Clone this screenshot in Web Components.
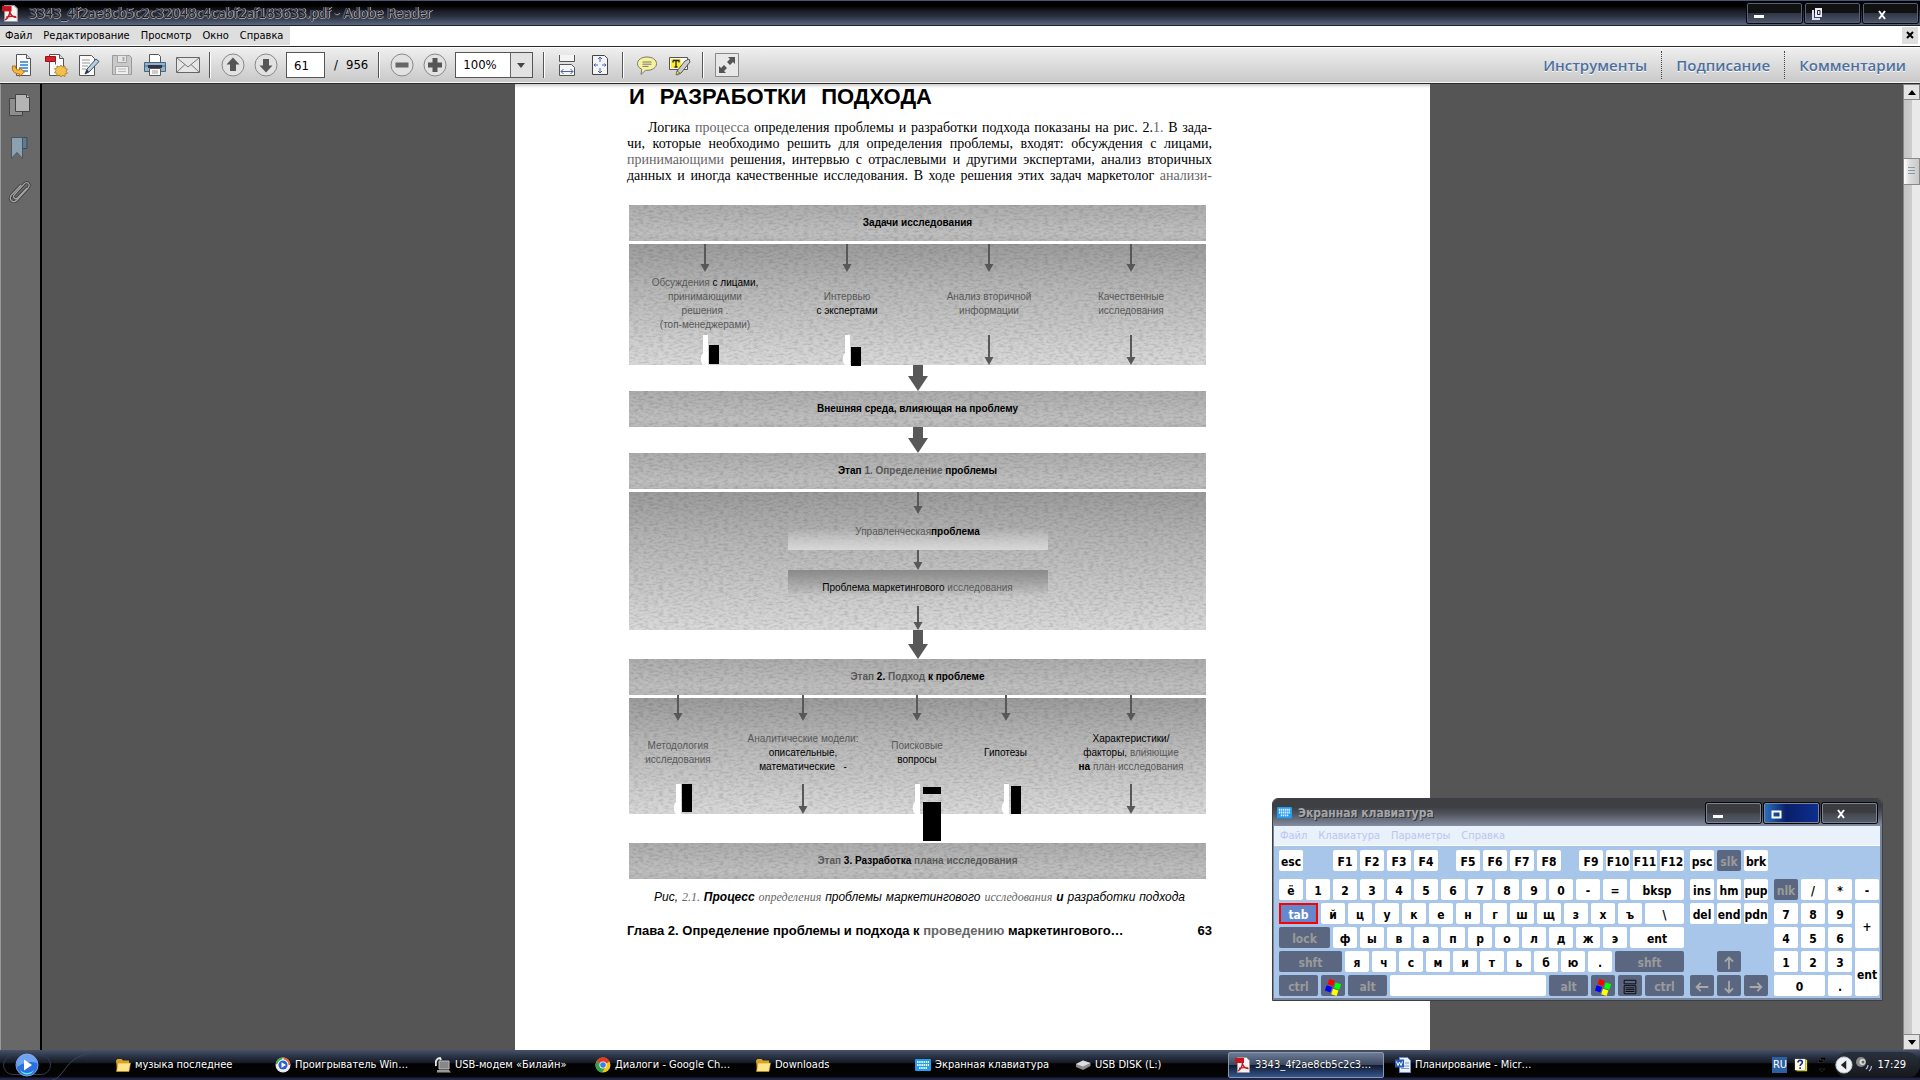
<!DOCTYPE html>
<html lang="ru">
<head>
<meta charset="utf-8">
<title>Adobe Reader</title>
<style>
html,body{margin:0;height:100%}
body{--ui:"DejaVu Sans Condensed","Noto Sans",sans-serif;font:11px/14px var(--ui);color:#000;overflow:hidden}
</style>
</head>
<body>
<app-desktop></app-desktop>
<script>
const define=(name,html)=>customElements.define(name,class extends HTMLElement{
  connectedCallback(){
    if(this.shadowRoot)return;
    const root=this.attachShadow({mode:'open'});
    const t=document.createElement('template');
    t.innerHTML='<style>:host,*{box-sizing:border-box}button{font:inherit;color:inherit;border:0;padding:0;margin:0;background:none}:host{display:block}:host([hidden]){display:none}</style>'+(typeof html==='function'?html(this):html);
    root.append(t.content.cloneNode(true));
  }
});

/* ---------- icons ---------- */
const sheet='<path d="M5.5 1.5h10l4 4v17h-14z" fill="#fafafa" stroke="#555"/><path d="M15.5 1.5v4h4" fill="#ddd" stroke="#555"/>';
const ICONS={
 open:[24,sheet+'<path d="M9 9h8M9 12h8M9 15h8M12 18h5" stroke="#2a7fd4" stroke-width="1.6"/><path d="M1.500 13c-1 6 3 8 7 8v2.500l5-4.500-5-4.500V17c-3 0-4-1-4-4z" fill="#f6b93b" stroke="#a9701a"/>'],
 create:[24,sheet+'<path d="M1.500 3.500h10v5h-10z" fill="#d9202c" stroke="#a01018"/><path d="M11.500 8.500v3" stroke="#555"/><path d="M17 12l1.500 2 2.500-1 0 2.500 2.500.7-1.500 2 1.500 2-2.500.8v2.500l-2.500-1L17 24l-1.500-2-2.500 1v-2.500l-2.500-.8 1.500-2-1.500-2 2.500-.7V13l2.500 1z" fill="#f3c04b" stroke="#a9772a" stroke-width=".8"/>'],
 sign:[24,'<path d="M2.500 2.500h12l3 3v17h-15z" fill="#fafafa" stroke="#555"/><path d="M5 7h8M5 10h8M5 13h6M5 16h4" stroke="#999"/><path d="M8 21l2-5L19 6l3 2.500L12 19z" fill="#b8cfe6" stroke="#3c4f63"/><path d="M8 21l2-5 2 3z" fill="#333"/>'],
 save:[24,'<path d="M2.500 2.500h17l2 2v17h-19z" fill="#c9c9c9" stroke="#9a9a9a"/><path d="M7.500 2.500h9v7h-9z" fill="#e6e6e6" stroke="#a5a5a5"/><path d="M12.500 4h2v4h-2z" fill="#aaa"/><path d="M5.500 13.500h13v8h-13z" fill="#eee" stroke="#a5a5a5"/><path d="M8 16h8M8 18.500h8" stroke="#bbb"/>'],
 print:[24,'<path d="M6.500 9v-7.500h9l2 2V9" fill="#fff" stroke="#555"/><path d="M1.500 9.500h21v9h-21z" fill="#8fb4d0" stroke="#476580"/><path d="M2 13h20" stroke="#476580"/><path d="M5 12h14v3H5z" fill="#334"/><path d="M6.500 15.500h11v7h-11z" fill="#fff" stroke="#555"/><path d="M9 18h6M9 20h6" stroke="#999"/>'],
 mail:[24,'<path d="M.5 4.500h23v15H.5z" fill="#e6e6e6" stroke="#666"/><path d="M1 5l11 9L23 5M1 19l8-7.500M23 19l-8-7.500" fill="none" stroke="#777"/>'],
 up:[24,'<circle cx="12" cy="12" r="11" fill="#e2e2e2" stroke="#888"/><path d="M12 4.500l6.500 7H15v6.500H9v-6.500H5.500z" fill="#555"/>'],
 down:[24,'<circle cx="12" cy="12" r="11" fill="#e2e2e2" stroke="#888"/><path d="M12 19.500l6.500-7H15V6H9v6.500H5.500z" fill="#555"/>'],
 minus:[24,'<circle cx="12" cy="12" r="11" fill="#e2e2e2" stroke="#888"/><path d="M5.500 9.500h13v5h-13z" fill="#666"/>'],
 plus:[24,'<circle cx="12" cy="12" r="11" fill="#e2e2e2" stroke="#888"/><path d="M9.500 5h5v4.500H19v5h-4.500V19h-5v-4.500H5v-5h4.500z" fill="#555"/>'],
 fitw:[24,'<path d="M4.500 2v6.500h15V2" fill="#f4f4f4" stroke="#555"/><path d="M4.500 22.500v-11h12l3 3v8z" fill="#f4f4f4" stroke="#555"/><path d="M6 18.500h12M8.500 16L6 18.500 8.500 21M15.500 16l2.500 2.500-2.500 2.500" fill="none" stroke="#4a62a8"/>'],
 fitp:[24,'<path d="M4.500 2.500h12l3 3v16h-15z" fill="#f4f4f4" stroke="#444"/><path d="M12 4v5M10 6l2-2 2 2M12 20v-5M10 18l2 2 2-2M6 12h4M7.500 10.500L6 12l1.500 1.500M18 12h-4M16.500 10.500L18 12l-1.500 1.500" fill="none" stroke="#4a62a8"/>'],
 note:[24,'<path d="M12 4c5.500 0 9.500 2.800 9.500 6.700S17.500 17.300 12 17.300h-1.500L6 21.500l.8-5.300C4 15 2.500 13 2.500 10.700 2.500 6.800 6.500 4 12 4z" fill="#f8f39a" stroke="#777"/><path d="M7.500 9h9M7.500 11.200h9M7.500 13.400h6" stroke="#777"/>'],
 hilite:[24,'<path d="M1.500 4.500h18v12h-18z" fill="#fafafa" stroke="#555"/><path d="M3 6h10v9H3z" fill="#ffee2e"/><path d="M5 7.500h6v2M5 7.500v2M8 8v6M6.500 14h3" stroke="#222" fill="none" stroke-width="1.300"/><path d="M9 18l8-10 4-2 1 3-9 11-4 2z" fill="#ccc" stroke="#555"/><path d="M8 22l1-4 3 2z" fill="#ffee2e" stroke="#775"/>'],
 full:[24,'<path d="M.5.500h23v23H.5z" fill="#e8e8e8" stroke="#888"/><path d="M13 4h7v7l-2-2-3 3-3-3 3-3zM11 20H4v-7l2 2 3-3 3 3-3 3z" fill="#555"/>'],
 pages:[24,'<path d="M1.500 5.500h13v17h-13z" fill="#8e8e8e" stroke="#444"/><path d="M7.500 1.500h11l3 3v14h-14z" fill="#b4b4b4" stroke="#444"/><path d="M18.500 1.500v3h3" fill="#ddd" stroke="#444"/>'],
 mark:[24,'<path d="M13 1.500h6v11h-6z" fill="#5b7b93" stroke="#3c4a55"/><path d="M3.500 1.500h11v21l-5.500-6-5.500 6z" fill="#8ba0b0" stroke="#4a545c"/>'],
 clip:[24,'<path d="M19 9l-9 9.500c-3 3-6-.5-3.500-3L16 5c3.500-3.500 7 .5 4 4l-11 12c-4 4-9-.5-5.500-5L13 6" fill="none" stroke="#333" stroke-width="2.800"/><path d="M19 9l-9 9.500c-3 3-6-.5-3.500-3L16 5c3.500-3.500 7 .5 4 4l-11 12c-4 4-9-.5-5.500-5L13 6" fill="none" stroke="#a5a5a5" stroke-width="1.300"/>'],
 pdf:[16,'<path d="M2.500.5h9l3 3v12h-12z" fill="#f4f4f4" stroke="#999"/><path d="M0 1h9v5H0z" fill="#c8141e"/><path d="M3 14c3-2 4.500-6 4.500-9M7.500 7c1 3 3 4.500 6 4.500M4 11.500c3-1 6-1.200 9-.5" fill="none" stroke="#c8141e" stroke-width="1.400"/>'],
 kb:[16,'<rect y="2" width="16" height="12" rx="1" fill="#249df0"/><path d="M2 5h12M2 8h12M4 11h8" stroke="#e8f6ff" stroke-width="2" stroke-dasharray="1.500 .7"/>'],
 folder:[16,'<path d="M1 3.500L2.500 2h4L8 3.500h6V13H2z" fill="#d9a526"/><path d="M3 6h12.500L14 14.500H1.500z" fill="#fbe58c" stroke="#c9962a" stroke-width=".6"/>'],
 wmp:[16,'<circle cx="8" cy="8" r="7.500" fill="#e8e8f0"/><path d="M8 .5A7.500 7.500 0 0 1 15.500 8H12z" fill="#e4632a"/><path d="M.5 8A7.500 7.500 0 0 1 8 .5L6 4z" fill="#3bb14a"/><circle cx="8" cy="8" r="5.500" fill="#fff"/><circle cx="8" cy="8" r="4.600" fill="#2a5fd0"/><path d="M6.500 5.200L11 8l-4.500 2.800z" fill="#fff"/>'],
 modem:[16,'<path d="M4 4h10v8H4z" fill="#888" stroke="#bbb"/><path d="M2 13h12l2 2.500H2z" fill="#999"/><path d="M1 9c-1-5 1-8 4-8l1 2" fill="none" stroke="#e8e8e8" stroke-width="2"/>'],
 chrome:[16,'<circle cx="8" cy="8" r="7.500" fill="#f5c518"/><path d="M8 8L1.500 4.200A7.500 7.500 0 0 1 14.700 4.600z" fill="#df3a2c"/><path d="M8 8L1.500 4.200A7.500 7.500 0 0 0 7 15.500L10 11z" fill="#35a14a"/><circle cx="8" cy="8" r="3.600" fill="#fff"/><circle cx="8" cy="8" r="2.800" fill="#3b7de0"/>'],
 usb:[16,'<path d="M1 7l7-3.500 7.500 2.500v3L8 13 1 10z" fill="#8b8b8b"/><path d="M1 7l7-3.500 7.500 2.500L8 9.500z" fill="#dcdcdc"/>'],
 word:[16,'<path d="M4.500.5h8l3 3v12h-11z" fill="#e9f0fb" stroke="#6a8cc7"/><path d="M6 9h8M6 11.500h8M10 6h4" stroke="#7c9bd0"/><path d="M0 2.500h9v8H0z" fill="#2b5cb3"/><path d="M1.500 4.500l1.500 4 1.500-3.500L6 8.500l1.500-4" stroke="#fff" fill="none"/>'],
 help:[16,'<path d="M1 1h12v13H1z" fill="#fffbe0"/><path d="M13 2h2v13H3v-1h10z" fill="#e6e04a"/><path d="M4.500 5c0-3 5-3 5 0 0 2-2.500 2-2.500 4M7 10.500v2" fill="none" stroke="#112a9a" stroke-width="1.800"/>'],
 sound:[18,'<circle cx="6" cy="6" r="5" fill="#8a8a8a"/><circle cx="7.500" cy="6" r="3" fill="#ddd"/><circle cx="8" cy="6" r="1.500" fill="#666"/><path d="M11 13c1.500-1 2-2 2-4M14 15c2-1.500 2.500-3 2.500-5" fill="none" stroke="#b9bede" stroke-width="1.200"/>'],
 back:[20,'<circle cx="10" cy="10" r="9" fill="#eef1f5" stroke="#bcc"/><path d="M12.500 5v10l-6-5z" fill="#222"/>'],
 flag:[20,'<path d="M6 1l6 2-2 6-6-2z" fill="#f00"/><path d="M13 5l6 2-2 6-6-2z" fill="#0f0"/><path d="M3 8l6 2-2 6-6-2z" fill="#00f"/><path d="M10 12l6 2-2 6-6-2z" fill="#ff0"/>'],
 ctx:[20,'<path d="M3.500 2.500h13v4h-13zM3.500 8.500h13v9h-13z" fill="none" stroke="#000"/><path d="M5 11h10M5 13h10M5 15h10" stroke="#000"/>'],
 aup:[20,'<path d="M10 17V4M5.500 8.500L10 4l4.500 4.500" fill="none" stroke="#a8a8a8" stroke-width="2"/>'],
 adn:[20,'<path d="M10 3v13M5.500 11.500L10 16l4.500-4.500" fill="none" stroke="#a8a8a8" stroke-width="2"/>'],
 alt:[20,'<path d="M17 10H4M8.500 5.500L4 10l4.500 4.500" fill="none" stroke="#a8a8a8" stroke-width="2"/>'],
 art:[20,'<path d="M3 10h13M11.500 5.500L16 10l-4.500 4.500" fill="none" stroke="#a8a8a8" stroke-width="2"/>'],
 orb:[24,'<circle cx="12" cy="12" r="11" fill="#2b6fe0" stroke="#7fa4d8"/><path d="M2 10a10 9 0 0 1 20 0c-6-2-13-1-20 4z" fill="#9cc4ff" opacity=".6"/><path d="M5 17c4 4 10 4 14 0-3 6-11 6-14 0z" fill="#5cf0ff"/><path d="M9 6.500l8 5.500-8 5.500z" fill="#fff"/>']
};
define('ui-icon',h=>{const[n,s]=ICONS[h.getAttribute('name')],z=h.getAttribute('size')||n;
 return `<style>:host{display:inline-flex;flex:none}svg{display:block}</style><svg width="${z}" height="${z}" viewBox="0 0 ${n} ${n}" aria-hidden="true">${s}</svg>`});

/* ---------- window frame ---------- */
define('frame-buttons',h=>{const d=h.hasAttribute('accent');return `<style>
:host{display:flex;gap:3px}
button{width:55px;height:20px;border:1px solid #566073;border-radius:2px;background:linear-gradient(#111 0 50%,#2d3544 50%,#4a5568);display:flex;align-items:center;padding:2px 0 0 5px;box-shadow:0 0 0 1px #05070c}
:host([accent]) button{background:linear-gradient(#3a3c40 0 50%,#43464e 50%,#555b6a);border-color:#7d8498}
:host([accent]) .m{background:linear-gradient(90deg,#2a6fc0,#0a1f6a 40%,#0c2f8c)}
button.x{padding-left:13px}
</style>
<button aria-label="Свернуть"><svg width="12" height="10"><path d="M1 6h10v3H1z" fill="#fff"/></svg></button>
<button class="m" aria-label="Развернуть"><svg width="12" height="12">${d?'<path d="M2.500 3.500h8v6h-8z" fill="none" stroke="#fff" stroke-width="2"/>':'<path d="M2 2v9h7" fill="none" stroke="#dde" stroke-width="2"/><path d="M4 0h7v9H4z" fill="#eef"/><path d="M6.500 2.500h2.500v4H6.500z" fill="none" stroke="#223"/>'}</svg></button>
<button class="x" aria-label="Закрыть"><svg width="11" height="11"><path d="M2 2l6 8M8 2L2 10" stroke="#fff" stroke-width="2"/></svg></button>`});

define('title-bar',`<style>
:host{display:flex;align-items:center;height:26px;padding:0 2px 0 2px;border-top:1px solid #4b5670;border-bottom:1px solid #1b1f2a;background:linear-gradient(#000 0 20%,#1d2029 45%,#2c313f 65%,#5a667e)}
h1{flex:1;margin:0 0 0 10px;font:14px/20px var(--ui);color:#20222a;text-shadow:1px 0 #b4b4bc,-1px 0 #6c6d76,0 1px #9a9aa4}
</style><ui-icon name="pdf" size="17"></ui-icon><h1><slot></slot></h1><frame-buttons></frame-buttons>`);

define('menu-bar',`<style>
:host{display:flex;justify-content:space-between;align-items:stretch;height:20px;background:#fff;padding:0 2px 0 0}
nav{display:flex;gap:11px;padding:0 7px 0 5px;background:#dedede;font:11px/18px var(--ui);margin-bottom:1px}
.c{width:16px;background:#dedede;margin:1px 0 2px;font:bold 11px/16px var(--ui)}
</style><nav><button>Файл</button><button>Редактирование</button><button>Просмотр</button><button>Окно</button><button>Справка</button></nav><button class="c" aria-label="Закрыть документ"><svg width="8" height="8"><path d="M1 1l6 6M7 1L1 7" stroke="#000" stroke-width="2"/></svg></button>`);

define('tool-bar',`<style>
:host{display:flex;align-items:center;height:38px;padding:0 14px 0 6px;border:solid #2a2a2a;border-width:1px 0;background:linear-gradient(#f0f0f0,#c8c8c8);box-shadow:inset 0 1px #fff,inset 0 -1px #f4f4f4;font:13px/16px var(--ui)}
.b{width:33px;height:30px;display:flex;align-items:center;justify-content:center}
.s{width:2px;height:26px;border-left:1px solid #555;border-right:1px solid #fff;margin:0 6px}
.s.w{margin:0 5px 0 10px}
.s.v{margin:0 5px}
input,select{font:13px/16px var(--ui);height:26px;border:1px solid #555;background:#fff;border-radius:0;margin:0;padding:0 0 0 7px;color:#000}
input{width:39px;margin:0 9px 0 4px}
.n{display:flex;gap:8px;align-items:center}
.z{position:relative;display:flex;margin-left:4px}
select{appearance:none;width:78px}
.z svg{position:absolute;right:1px;top:1px;pointer-events:none}
.sp{flex:1}
a{font:600 15px/20px "Open Sans","Noto Sans",sans-serif;color:#4d6f9e;text-decoration:none;text-shadow:0 1px #fff;padding:4px 14px;border-right:1px dotted #444}
a:last-child{border:0;padding-right:0}
</style>
<button class="b" aria-label="Открыть"><ui-icon name="open"></ui-icon></button><button class="b" aria-label="Создать PDF"><ui-icon name="create"></ui-icon></button><button class="b" aria-label="Подписать"><ui-icon name="sign"></ui-icon></button><button class="b" aria-label="Сохранить"><ui-icon name="save"></ui-icon></button><button class="b" aria-label="Печать"><ui-icon name="print"></ui-icon></button><button class="b" aria-label="Почта"><ui-icon name="mail"></ui-icon></button>
<span class="s v"></span>
<button class="b" aria-label="Предыдущая"><ui-icon name="up"></ui-icon></button><button class="b" aria-label="Следующая"><ui-icon name="down"></ui-icon></button>
<input value="61" aria-label="Страница"><span class="n"><span>/</span><span>956</span></span>
<span class="s w"></span>
<button class="b" aria-label="Уменьшить"><ui-icon name="minus"></ui-icon></button><button class="b" aria-label="Увеличить"><ui-icon name="plus"></ui-icon></button>
<span class="z"><select aria-label="Масштаб"><option>100%</option></select><svg width="22" height="24"><path d="M0 0h22v24H0z" fill="#e2e2e2"/><path d="M.5 0v24" stroke="#666"/><path d="M7 10h8l-4 5z" fill="#444"/></svg></span>
<span class="s w"></span>
<button class="b" aria-label="По ширине"><ui-icon name="fitw"></ui-icon></button><button class="b" aria-label="Страница целиком"><ui-icon name="fitp"></ui-icon></button>
<span class="s"></span>
<button class="b" aria-label="Заметка"><ui-icon name="note"></ui-icon></button><button class="b" aria-label="Выделение"><ui-icon name="hilite"></ui-icon></button>
<span class="s"></span>
<button class="b" aria-label="Полный экран"><ui-icon name="full"></ui-icon></button>
<span class="sp"></span><a href="#tools">Инструменты</a><a href="#sign">Подписание</a><a href="#comments">Комментарии</a>`);

define('side-rail',`<style>
:host{display:flex;flex-direction:column;align-items:center;gap:19px;width:42px;padding:9px 2px 0 0;background:#686868;border-right:2px solid #000;border-left:1px solid #999}
button{display:flex}
</style><button aria-label="Миниатюры"><ui-icon name="pages"></ui-icon></button><button aria-label="Закладки"><ui-icon name="mark"></ui-icon></button><button aria-label="Вложения"><ui-icon name="clip"></ui-icon></button>`);

define('scroll-strip',`<style>
:host{display:flex;flex-direction:column;width:17px;background:linear-gradient(90deg,#888 0 1px,#c4c4c4 1px,#ccc 50%,#e9e9e9 55%)}
button{height:16px;background:#e4e4e4;border:1px solid #fff;outline:1px solid #888;outline-offset:-1px;display:flex;align-items:center;justify-content:center}
.t{height:27px;margin-top:58px;background:linear-gradient(90deg,#fff,#dcdcdc 40%,#c8c8c8)}
.g{flex:1}
</style><button aria-label="Вверх"><svg width="8" height="5"><path d="M0 5l4-5 4 5z"/></svg></button><button class="t" aria-label="Ползунок"><svg width="7" height="9"><path d="M0 .5h7M0 3.500h7M0 6.500h7" stroke="#89a"/></svg></button><span class="g"></span><button aria-label="Вниз"><svg width="8" height="5"><path d="M0 0l4 5 4-5z"/></svg></button>`);

/* ---------- flow chart parts ---------- */
define('flow-arrow',h=>{const H=+h.getAttribute('len'),thick=h.hasAttribute('thick');
 return `<style>:host{display:flex;justify-content:center;height:${H}px}svg{display:block;overflow:visible}</style><svg width="18" height="${H}"><path d="${thick?`M4 0h10v${H-15}h5L9 ${H}l-10-15h5z`:`M8 0h2v${H-8}h3.500L9 ${H}l-4.500-8H8z`}" fill="#585858"/></svg>`});

/* a scan defect: white streak with solid blocks given as x,y,w,h */
define('scan-mark',h=>{const r=h.getAttribute('blocks').split(' ').map(b=>{const[x,y,w,k]=b.split(',');return `<rect x="${20+ +x}" y="${y}" width="${w}" height="${k}"/>`}).join('');
 return `<style>:host{display:flex;justify-content:center;height:30px}svg{display:block;overflow:visible}</style><svg width="40" height="30"><path d="M18 0h5v30h-5c-3-3-3-9 0-12z" fill="#fff"/>${r}</svg>`});

const grain=`<svg class="g" aria-hidden="true"><filter id="n" x="0" y="0" width="100%" height="100%"><feTurbulence type="fractalNoise" baseFrequency=".2 .5" numOctaves="3" seed="4"/><feColorMatrix values="0 0 0 0 0  0 0 0 0 0  0 0 0 0 0  1.500 0 0 0 -.6"/></filter><rect width="100%" height="100%" filter="url(#n)"/></svg>`;
const grainCss='.g{position:absolute;inset:0;width:100%;height:100%;opacity:.2;pointer-events:none}';
define('flow-head',`<style>
:host{position:relative;display:flex;align-items:center;justify-content:center;height:36px;background:linear-gradient(#adadad,#c0c0c0 80%,#b8b8b8);font:bold 10px/14px "Liberation Sans",sans-serif}
${grainCss}span{position:relative;white-space:pre}
</style>${grain}<span><slot></slot></span>`);
define('flow-body',`<style>
:host{position:relative;display:block;margin-top:3px;background:linear-gradient(#9c9c9c,#b6b6b6 35%,#c6c6c6 65%,#dadada)}
${grainCss}div{position:relative}
</style>${grain}<div><slot></slot></div>`);
define('flow-col',`<style>
:host{display:flex;flex-direction:column;font:10px/14px "Liberation Sans",sans-serif;text-align:center}
p{flex:1;margin:0;display:flex;flex-direction:column;justify-content:center;white-space:nowrap;align-items:center}
</style><slot name="top"></slot><p><slot></slot></p><slot name="bottom"></slot>`);

define('doc-page',`<style>
:host{flex:0 1 915px;min-width:0;background:#fff;padding:0 218px 0 112px;box-shadow:inset 0 4px 3px -2px #ccc;font-family:"Liberation Sans",sans-serif}
i{font-style:normal;color:#666}
.f i{color:#585858}
h2{margin:0 0 0 2px;width:303px;font:bold 22px/26px "Liberation Sans",sans-serif;text-align-last:justify;white-space:nowrap}
.t{margin:10px 0 21px;font:14px/16px "Liberation Serif",serif}
.t span{display:block;text-align-last:justify;white-space:nowrap}
.t span:first-child{padding-left:21px}
.f{margin:0 6px 0 2px}
.c4{display:grid;grid-template-columns:repeat(4,1fr);height:121px;padding:0 4px 0 5px}
.c5{display:grid;grid-template-columns:98fr 152fr 76fr 101fr 150fr;height:116px}
.c5 flow-arrow[slot=top]{margin-top:-3px}
.in{width:260px;height:36px;margin:0 auto;display:flex;align-items:center;justify-content:center;font:10px/14px "Liberation Sans",sans-serif;white-space:pre}
.a{background:linear-gradient(#aaa0 40%,#d8d8d8)}
.b{background:linear-gradient(#8a8a8a,#c4c4c400 75%)}
.gap{height:29px}
.cap{margin:10px 27px 0;font:italic 12px/16px "Liberation Sans",sans-serif;text-align-last:justify;white-space:nowrap}
.cap i{font:italic 12px/16px "Liberation Serif",serif}
.foot{display:flex;justify-content:space-between;margin-top:17px;font:bold 13px/18px "Liberation Sans",sans-serif}
</style>
<h2>И РАЗРАБОТКИ ПОДХОДА</h2>
<p class="t"><span>Логика <i>процесса</i> определения проблемы и разработки подхода показаны на рис. 2.<i>1.</i> В зада-</span><span>чи, которые необходимо решить для определения проблемы, входят: обсуждения с лицами,</span><span><i>принимающими</i> решения, интервью с отраслевыми и другими экспертами, анализ вторичных</span><span>данных и иногда качественные исследования. В ходе решения этих задач маркетолог <i>анализи-</i></span></p>
<div class="f">
<flow-head>Задачи исследования</flow-head>
<flow-body><div class="c4">
<flow-col><flow-arrow slot="top" len="28"></flow-arrow><span><i>Обсуждения</i> с лицами,</span><i>принимающими</i><i>решения .</i><i>(топ-менеджерами)</i><scan-mark slot="bottom" blocks="4,10,10,19"></scan-mark></flow-col>
<flow-col><flow-arrow slot="top" len="28"></flow-arrow><i>Интервью</i><span>с экспертами</span><scan-mark slot="bottom" blocks="4,12,10,19"></scan-mark></flow-col>
<flow-col><flow-arrow slot="top" len="28"></flow-arrow><i>Анализ вторичной</i><i>информации</i><flow-arrow slot="bottom" len="30"></flow-arrow></flow-col>
<flow-col><flow-arrow slot="top" len="28"></flow-arrow><i>Качественные</i><i>исследования</i><flow-arrow slot="bottom" len="30"></flow-arrow></flow-col>
</div></flow-body>
<flow-arrow thick len="26"></flow-arrow>
<flow-head>Внешняя среда, влияющая на проблему</flow-head>
<flow-arrow thick len="26"></flow-arrow>
<flow-head>Этап <i>1. Определение</i> проблемы</flow-head>
<flow-body><flow-arrow len="22"></flow-arrow><div class="in a"><i>Управленческая</i><b>проблема</b></div><flow-arrow len="20"></flow-arrow><div class="in b">Проблема маркетингового <i>исследования</i></div><flow-arrow len="24"></flow-arrow></flow-body>
<flow-arrow thick len="29"></flow-arrow>
<flow-head><i>Этап</i> 2. <i>Подход</i> к проблеме</flow-head>
<flow-body><div class="c5">
<flow-col><flow-arrow slot="top" len="26"></flow-arrow><i>Методология</i><i>исследования</i><scan-mark slot="bottom" blocks="4,0,10,28"></scan-mark></flow-col>
<flow-col><flow-arrow slot="top" len="26"></flow-arrow><i>Аналитические модели:</i><span>описательные,</span><span>математические &nbsp; -</span><flow-arrow slot="bottom" len="30"></flow-arrow></flow-col>
<flow-col><flow-arrow slot="top" len="26"></flow-arrow><i>Поисковые</i><span>вопросы</span><scan-mark slot="bottom" blocks="6,3,18,7 6,18,18,39"></scan-mark></flow-col>
<flow-col><flow-arrow slot="top" len="26"></flow-arrow><span>Гипотезы</span><scan-mark slot="bottom" blocks="5,2,10,28"></scan-mark></flow-col>
<flow-col><flow-arrow slot="top" len="26"></flow-arrow><span>Характеристики/</span><span>факторы, <i>влияющие</i></span><span><b>на</b> <i>план исследования</i></span><flow-arrow slot="bottom" len="30"></flow-arrow></flow-col>
</div></flow-body>
<div class="gap"></div>
<flow-head><i>Этап</i> 3. Разработка <i>плана исследования</i></flow-head>
</div>
<p class="cap">Рис, <i>2.1.</i> <b>Процесс</b> <i>определения</i> проблемы маркетингового <i>исследования</i> <b>и</b> разработки подхода</p>
<div class="foot"><span>Глава 2. Определение проблемы и подхода к <i>проведению</i> маркетингового…</span><span>63</span></div>`);

/* ---------- on-screen keyboard ---------- */
define('kb-key',h=>`<style>
:host{display:flex;width:${h.getAttribute('w')||24}px}
button{flex:1;min-width:0;border-radius:2px;background:#fff;font:bold 12px/16px var(--ui);color:#000;display:flex;align-items:center;justify-content:center;overflow:hidden;white-space:nowrap}
slot{display:block;padding-top:2px}
:host([mod]) button{background:#5b6780;color:#9a9a9a}
:host([on]) button{background:#6389cc;color:#fff;border:2px solid #f00;border-radius:0}
</style><button><slot></slot></button>`);

define('screen-keyboard',()=>{
 const k=(t,w,a='')=>`<kb-key${w?` w="${w}"`:''} ${a}>${t}</kb-key>`, ic=n=>`<ui-icon name="${n}" size="18"></ui-icon>`;
 const row=(...c)=>`<div class="r">${c.join('')}</div>`, many=s=>s.split(' ').map(c=>k(c)).join('');
 const gap=w=>`<s style="width:${w}px"></s>`;
 return `<style>
:host{display:flex;flex-direction:column;border:1px solid #3c3f48;border-radius:6px 6px 0 0;background:#7a8499;padding:0 2px 2px 1px;width:611px}
header{display:flex;align-items:center;gap:6px;height:27px;margin:0 -2px 0 -1px;padding:0 5px 0 4px;border-radius:5px 5px 0 0;background:linear-gradient(#3d3f43 0 30%,#50545c 55%,#858da2)}
h2{flex:1;margin:0;font:bold 12px/20px var(--ui);color:#a6a6aa;text-shadow:1px 1px #333}
nav{display:flex;gap:11px;height:20px;padding:0 6px;background:#e9f1fb;border-bottom:1px solid #fff;font:11px/18px var(--ui);color:#b9c6f2}
main{display:grid;grid-template-columns:405px 78px 105px;column-gap:6px;background:#a8c5ea;padding:4px 3px 2px 5px;row-gap:8px}
.r{display:flex;gap:3px;height:21px}
.col{display:flex;flex-direction:column;gap:3px}
.num{display:grid;grid-template-columns:repeat(4,24px);grid-auto-rows:21px;gap:3px}
.tall{grid-row:span 2}.wide{grid-column:span 2}
ui-icon{vertical-align:top}
s{flex:none;display:block}
</style>
<header><ui-icon name="kb" size="15"></ui-icon><h2>Экранная клавиатура</h2><frame-buttons accent></frame-buttons></header>
<nav><button>Файл</button><button>Клавиатура</button><button>Параметры</button><button>Справка</button></nav>
<main>
${row(k('esc'),gap(24),many('F1 F2 F3 F4'),gap(12),many('F5 F6 F7 F8'),gap(12),many('F9 F10 F11 F12'))}
${row(k('psc'),k('slk',0,'mod'),k('brk'))}<div></div>
<div class="col">
${row(many('ё 1 2 3 4 5 6 7 8 9 0 - ='),k('bksp',54))}
${row(k('tab',39,'on'),many('й ц у к е н г ш щ з х ъ'),k('\\',39))}
${row(k('lock',51,'mod'),many('ф ы в а п р о л д ж э'),k('ent',54))}
${row(k('shft',63,'mod'),many('я ч с м и т ь б ю .'),k('shft',69,'mod'))}
${row(k('ctrl',39,'mod'),k(ic('flag'),0,'mod'),k('alt',39,'mod'),k('',156),k('alt',39,'mod'),k(ic('flag'),0,'mod'),k(ic('ctx'),0,'mod'),k('ctrl',39,'mod'))}
</div>
<div class="col">
${row(many('ins hm pup'))}${row(many('del end pdn'))}${row()}${row(gap(24),k(ic('aup'),0,'mod'))}${row(k(ic('alt'),0,'mod'),k(ic('adn'),0,'mod'),k(ic('art'),0,'mod'))}
</div>
<div class="num">${k('nlk',0,'mod')}${many('/ * - 7 8 9')}${k('+',0,'class="tall"')}${many('4 5 6 1 2 3')}${k('ent',0,'class="tall"')}${k('0',51,'class="wide"')}${k('.')}</div>
</main>`});

/* ---------- taskbar ---------- */
define('task-item',h=>`<style>
:host{width:160px;display:flex;padding:2px 3px 2px 1px}
button{flex:1;min-width:0;display:flex;align-items:center;gap:4px;padding:0 7px;border-radius:2px;color:#fff;font:11px/16px var(--ui);white-space:nowrap;overflow:hidden;text-shadow:0 0 1px #000}
:host([on]) button{background:linear-gradient(#6d7c94,#3d4963 48%,#10182c 50%,#34568e);border:1px solid #8a97ae;padding:0 6px}
</style><button><ui-icon name="${h.getAttribute('icon')}"></ui-icon><span><slot></slot></span></button>`);
define('task-bar',`<style>
:host{display:flex;align-items:stretch;height:30px;background:linear-gradient(#46526a,#2c3546 20%,#151a24 42%,#020203 46%,#050506 88%,#23284a 96%);color:#fff;font:11px/16px var(--ui)}
.start{width:107px;display:flex;align-items:center}
.start button{display:flex;margin-left:3px;padding:0 11px;border:1px solid #2f3b4e;border-radius:12px;height:20px;align-items:center}
.start ui-icon{margin:-3px 0}
.start svg{height:30px;width:44px;margin-left:1px}
.tray{margin-left:auto;display:flex;align-items:center}
.ru{background:#2f5fa3;width:15px;text-align:center;margin-right:7px}
.clock{display:flex;align-items:center;gap:4px;height:26px;border-radius:13px;background:linear-gradient(#2a303c,#15171c);padding-right:14px}
.clock ui-icon:first-child{margin-right:-2px}
.w{margin:0 9px 0 10px}
</style>
<div class="start"><button aria-label="Пуск"><ui-icon name="orb"></ui-icon></button><svg viewBox="0 0 44 30"><path d="M0 30C14 28 12 4 44 3V0" fill="none" stroke="#3b465a"/></svg></div>
<task-item icon="folder">музыка последнее</task-item><task-item icon="wmp">Проигрыватель Win…</task-item><task-item icon="modem">USB-модем «Билайн»</task-item><task-item icon="chrome">Диалоги - Google Ch…</task-item><task-item icon="folder">Downloads</task-item><task-item icon="kb">Экранная клавиатура</task-item><task-item icon="usb">USB DISK (L:)</task-item><task-item icon="pdf" on>3343_4f2ae8cb5c2c3…</task-item><task-item icon="word">Планирование - Micr…</task-item>
<div class="tray"><span class="ru">RU</span><ui-icon name="help" size="14"></ui-icon><svg class="w" width="8" height="16"><path d="M2.500.5h5v3h-5zM.5 2.500h5v3h-5zM1 12h6l-3 3z" fill="#000" stroke="#333" stroke-width=".6"/></svg><div class="clock"><ui-icon name="back" size="18"></ui-icon><ui-icon name="sound"></ui-icon><time>17:29</time></div></div>`);

define('app-desktop',`<style>
:host{display:flex;flex-direction:column;height:100vh;position:relative}
main{flex:1;min-height:0;display:flex;background:#555}
.v{flex:1;display:flex;justify-content:center;overflow:hidden}
screen-keyboard{position:absolute;right:37px;bottom:79px}
</style>
<title-bar>3343_4f2ae8cb5c2c32048c4cabf2af183633.pdf - Adobe Reader</title-bar>
<menu-bar></menu-bar><tool-bar></tool-bar>
<main><side-rail></side-rail><div class="v"><doc-page></doc-page></div><scroll-strip></scroll-strip></main>
<task-bar></task-bar>
<screen-keyboard></screen-keyboard>`);
</script>
</body>
</html>
